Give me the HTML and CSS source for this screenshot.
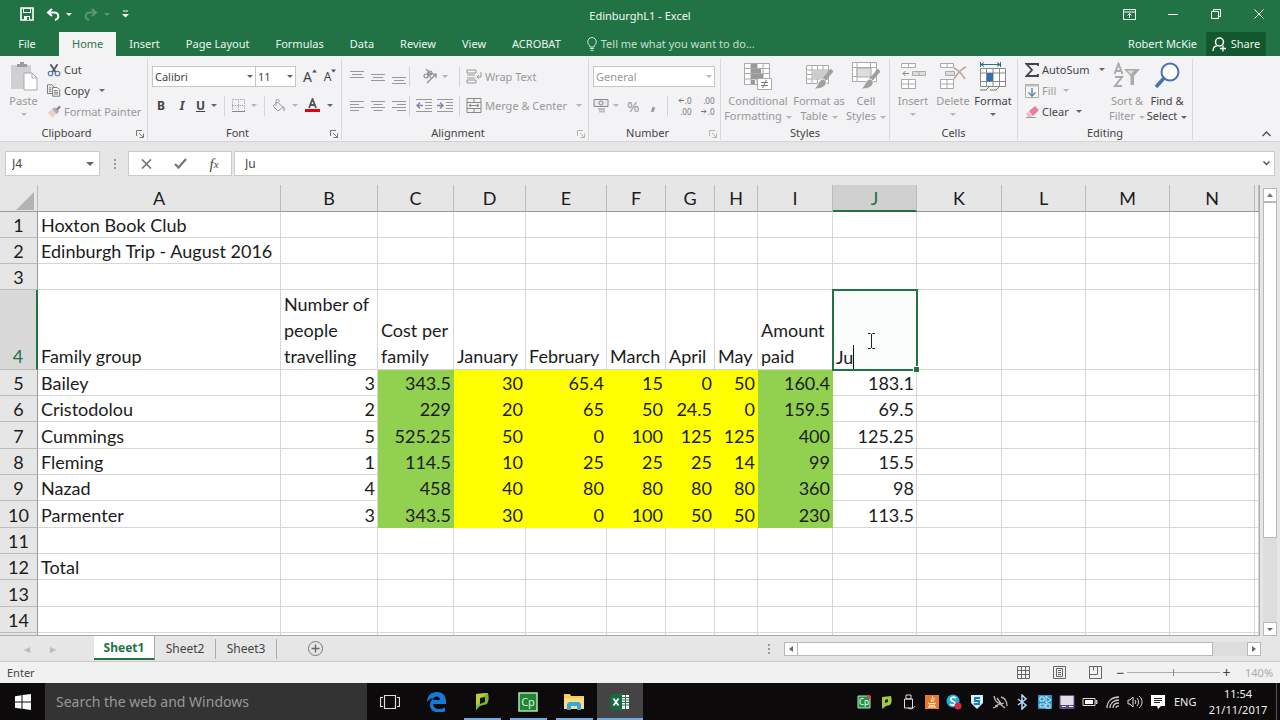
FILE: index.html
```html
<!DOCTYPE html>
<html lang="en">
<head>
<meta charset="utf-8">
<title>EdinburghL1 - Excel</title>
<link rel="stylesheet" href="styles.css">
</head>
<body>
<header class="titlebar">
  <div class="quick">
    <button aria-label="Save"><svg width="14" height="14" viewBox="0 0 14 14"><path d="M1 1h12v12H1z" fill="none" stroke="#fff" stroke-width="1.6"/><path d="M3 1h8v5H3zM4 9h6v4H4z" fill="#fff"/><path d="M4 2h6v3H4zM7 10h2v3H7z" fill="#217346"/></svg></button>
    <button aria-label="Undo"><svg width="14" height="13" viewBox="0 0 14 13"><path d="M6 1 2 4.500l4 3.500M2 4.500h6c5 0 6 6 1 7.500" fill="none" stroke="#fff" stroke-width="2"/></svg><i class="arrow light"></i></button>
    <button class="faded" aria-label="Redo"><svg width="14" height="13" viewBox="0 0 14 13"><path d="m8 1 4 3.500L8 8M12 4.500H6c-5 0-6 6-1 7.500" fill="none" stroke="#fff" stroke-width="2"/></svg><i class="arrow light"></i></button>
    <button aria-label="Customize"><svg width="7" height="8" viewBox="0 0 7 8"><path d="M1 1h5" stroke="#fff"/><path d="M0 4h7L3.500 7.500z" fill="#fff"/></svg></button>
  </div>
  <h1>EdinburghL1 - Excel</h1>
  <div class="winbtns">
    <button aria-label="Ribbon options"><svg width="13" height="11" viewBox="0 0 13 11"><path d="M.5.5h12v10H.5zM.5 3h12M6.500 9V4.500M4.500 6.500l2-2 2 2" fill="none" stroke="#fff"/></svg></button>
    <button aria-label="Minimize"><svg width="10" height="10" viewBox="0 0 10 10"><path d="M0 5.500h10" stroke="#fff"/></svg></button>
    <button aria-label="Restore"><svg width="10" height="10" viewBox="0 0 10 10"><path d="M.5 2.500h7v7h-7zM2.500 2.500v-2h7v7h-2" fill="none" stroke="#fff"/></svg></button>
    <button aria-label="Close"><svg width="10" height="10" viewBox="0 0 10 10"><path d="m.5.5 9 9m0-9-9 9" stroke="#fff"/></svg></button>
  </div>
</header>
<nav class="tabs">
  <button class="file">File</button><button class="current">Home</button><button>Insert</button><button>Page Layout</button><button>Formulas</button><button>Data</button><button>Review</button><button>View</button><button>ACROBAT</button>
  <button class="tell"><svg width="10" height="14" viewBox="0 0 10 14"><path d="M3 10C3 8 .7 7.500.7 4.800a4.300 4.300 0 0 1 8.600 0C9.300 7.500 7 8 7 10zM3 11.500h4M3.500 13.300h3" fill="none" stroke="#d9eadf"/></svg>Tell me what you want to do...</button>
  <span class="user">Robert McKie</span>
  <button class="share"><svg width="15" height="15" viewBox="0 0 15 15"><circle cx="7.500" cy="5" r="4" fill="none" stroke="#fff" stroke-width="1.500"/><path d="M1 14c0-3 2-5 4.500-5.500M8 11.500h6M11 8.500v6" fill="none" stroke="#fff" stroke-width="1.300"/></svg>Share</button>
</nav>
<section class="ribbon">
  <div class="group clipboard">
    <div class="body">
      <button class="big dim paste"><svg width="28" height="29" viewBox="0 0 28 29"><path d="M1 3h20v24H1z" fill="#d0d0d2"/><path d="M7 5V2h3V0h4v2h3v3z" fill="#9c9c9e"/><path d="M14 11h8l5 5v12H14z" fill="#fff" stroke="#a9a9ab"/><path d="M22 11v5h5" fill="none" stroke="#a9a9ab"/></svg><span>Paste</span><i class="arrow"></i></button>
      <div class="three">
        <button><svg width="14" height="14" viewBox="0 0 16 15"><path d="m4 1 6 9M12 1 6 10" stroke="#555" stroke-width="2"/><circle cx="4" cy="11.500" r="2.600" fill="none" stroke="#5572aa" stroke-width="1.300"/><circle cx="12" cy="11.500" r="2.600" fill="none" stroke="#5572aa" stroke-width="1.300"/></svg>Cut</button>
        <button><svg width="14" height="13" viewBox="0 0 16 14"><path d="M.5.5h5l3 3v7h-8z" fill="#fff" stroke="#666"/><path d="M6.500 3.500h5l3 3v7h-8zM2 4h3M2 6h3M2 8h3M8 7h4M8 9h5M8 11h5" fill="#fff" stroke="#666"/></svg>Copy<i class="arrow far"></i></button>
        <button class="dim"><svg width="14" height="13" viewBox="0 0 16 14"><path d="m1 8 5-4 5 5-5 5z" fill="#edcfc5"/><path d="m6 4 3-2 5 5-3 3z" fill="#b0acb5"/><path d="m10 4 4-4 2 2-4 4z" fill="#888995"/></svg>Format Painter</button>
      </div>
    </div>
    <footer>Clipboard<svg class="launch" viewBox="0 0 8 8"><use href="#launch"/></svg></footer>
  </div>
  <div class="group font">
    <div class="body two">
      <div class="line">
        <span class="pick w-name"><select aria-label="Font"><option>Calibri</option></select><i class="arrow"></i></span><span class="pick w-size"><select aria-label="Font size"><option>11</option></select><i class="arrow"></i></span>
        <button class="letter grow" aria-label="Increase font size">A<svg width="5" height="4" viewBox="0 0 5 4"><path d="M0 3.500 2.500.5 5 3.500z" fill="#456"/></svg></button>
        <button class="letter" aria-label="Decrease font size"><small>A</small><svg width="5" height="4" viewBox="0 0 5 4"><path d="M0 .5h5L2.500 3.500z" fill="#456"/></svg></button>
      </div>
      <div class="line styles">
        <button><b>B</b></button><button><b><em>I</em></b></button><button><b><u>U</u></b><i class="arrow"></i></button>
        <i class="rule"></i>
        <button class="dim"><svg width="13" height="13" viewBox="0 0 13 13"><path d="M.5.5h12v12H.5zM6.500 0v13M0 6.500h13" fill="none" stroke="#aaa" stroke-dasharray="1.500 1"/><path d="M0 12.500h13" stroke="#888"/></svg><i class="arrow"></i></button>
        <i class="rule"></i>
        <button class="dim"><svg width="14" height="14" viewBox="0 0 14 14"><path d="m5 3 6 5-5 4-5-5zM4 7V2c0-3 4-2 3 1" fill="#f6f6f6" stroke="#999"/><path d="M11 7c3 1 3 5 1 5s-1-3-1-5" fill="#bbc"/></svg><i class="arrow"></i></button>
        <button class="colour" aria-label="Font color"><svg width="16" height="15" viewBox="0 0 16 15"><path d="M4 10 7.500 1 11 10M5.200 7h4.600" fill="none" stroke="#555" stroke-width="1.800"/><path d="M0 11h15v3H0z" fill="#e5000b"/></svg><i class="arrow"></i></button>
      </div>
    </div>
    <footer>Font<svg class="launch" viewBox="0 0 8 8"><use href="#launch"/></svg></footer>
  </div>
  <div class="group align">
    <div class="body two dim">
      <div class="line">
        <button class="slot"><svg width="14" height="14" viewBox="0 0 14 14"><path d="M0 1.500h14M2 4.500h10M0 7.500h14" stroke="#999"/></svg></button>
        <button class="slot"><svg width="14" height="14" viewBox="0 0 14 14"><path d="M0 4.500h14M2 7.500h10M0 10.500h14" stroke="#999"/></svg></button>
        <button class="slot"><svg width="14" height="14" viewBox="0 0 14 14"><path d="M0 7.500h14M2 10.500h10M0 13.500h14" stroke="#999"/></svg></button>
        <i class="rule"></i>
        <button class="orient"><svg width="16" height="15" viewBox="0 0 16 15"><g fill="none" stroke="#888" stroke-width="1.200"><circle cx="4" cy="7" r="2"/><path d="m5 4 4 5"/><circle cx="8" cy="4" r="2"/><path d="m4 0 6 6M5 14l9-9m-4 0h4v4"/></g></svg><i class="arrow near"></i></button>
        <i class="rule"></i>
        <button class="labelled"><svg width="16" height="15" viewBox="0 0 16 15"><path d="M1 1h9v3H1zM1 6h8M1 9h8M1 11h9v3H1zM15 3v5h-4m2-2-2 2 2 2" fill="none" stroke="#999"/></svg>Wrap Text</button>
      </div>
      <div class="line">
        <button class="slot"><svg width="14" height="12" viewBox="0 0 14 12"><path d="M0 1.500h14M0 4.500h9M0 7.500h14M0 10.500h9" stroke="#999"/></svg></button>
        <button class="slot"><svg width="14" height="12" viewBox="0 0 14 12"><path d="M0 1.500h14M2.500 4.500h9M0 7.500h14M2.500 10.500h9" stroke="#999"/></svg></button>
        <button class="slot"><svg width="14" height="12" viewBox="0 0 14 12"><path d="M0 1.500h14M5 4.500h9M0 7.500h14M5 10.500h9" stroke="#999"/></svg></button>
        <i class="rule"></i>
        <div class="orient"><button class="slot"><svg width="16" height="13" viewBox="0 0 16 13"><path d="M0 .5h16M9 3.500h7M9 6.500h7M9 9.500h7M0 12.500h16" stroke="#999"/><path d="M7 6.500H1m3-3-3 3 3 3" fill="none" stroke="#7884a0" stroke-width="1.300"/></svg></button>
        <button class="slot"><svg width="16" height="13" viewBox="0 0 16 13"><path d="M0 .5h16M9 3.500h7M9 6.500h7M9 9.500h7M0 12.500h16" stroke="#999"/><path d="M0 6.500h6m-3-3 3 3-3 3" fill="none" stroke="#7884a0" stroke-width="1.300"/></svg></button></div>
        <i class="rule"></i>
        <button class="labelled"><svg width="16" height="15" viewBox="0 0 16 15"><path d="M1 .5h14v14H1zM1 4.500h14M1 10.500h14M8 .5v4M8 10.500v4M3 7.500h10M5 6 3 7.500 5 9M11 6l2 1.500L11 9" fill="none" stroke="#888"/></svg>Merge &amp; Center<i class="arrow far"></i></button>
      </div>
    </div>
    <footer>Alignment<svg class="launch pale" viewBox="0 0 8 8"><use href="#launch"/></svg></footer>
  </div>
  <div class="group number">
    <div class="body two dim">
      <div class="line"><span class="pick w-format"><select aria-label="Number format"><option>General</option></select><i class="arrow"></i></span></div>
      <div class="line nums">
        <button><svg width="16" height="15" viewBox="0 0 16 15"><path d="M1 1.500h14v7H1z" fill="#e7e9ee" stroke="#888"/><circle cx="8" cy="5" r="2" fill="none" stroke="#888"/><path d="M5 11h7M6 13.500h6" stroke="#bbb" stroke-width="2"/></svg><i class="arrow near"></i></button>
        <button class="percent">%</button><button class="comma">,</button>
        <i class="rule"></i>
        <button class="decimal" aria-label="Increase decimal"><span><svg width="6" height="5" viewBox="0 0 6 5"><path d="M6 2.500H1m2-2-2 2 2 2" fill="none" stroke="#777"/></svg>.0</span><span>.00</span></button><button class="decimal" aria-label="Decrease decimal"><span>.00</span><span><svg width="6" height="5" viewBox="0 0 6 5"><path d="M0 2.500h5m-2-2 2 2-2 2" fill="none" stroke="#777"/></svg>.0</span></button>
      </div>
    </div>
    <footer>Number<svg class="launch pale" viewBox="0 0 8 8"><use href="#launch"/></svg></footer>
  </div>
  <div class="group looks">
    <div class="body dim">
      <button class="big w-cond"><svg width="28" height="29" viewBox="0 0 28 29"><path d="M.5 1.500h25v21H.5zM.5 6.500h25M.5 11.500h25M.5 17h25M7 1.500v21M13 1.500v21M19 1.500v21" fill="#fff" stroke="#aaa"/><path d="M7 2h6v4H7zM7 7h10v4H7zM7 12h12v5H7zM7 18h4v4H7z" fill="#999"/><path d="M13.500 16.500h14v11h-14z" fill="#fff" stroke="#aaa"/><path d="M17 20.500h7M17 23.500h7M22.500 18l-4 8" stroke="#777"/></svg><span>Conditional<br>Formatting<i class="arrow near"></i></span></button>
      <button class="big w-table"><svg width="28" height="29" viewBox="0 0 28 29"><use href="#gridbrush"/></svg><span>Format as<br>Table<i class="arrow near"></i></span></button>
      <button class="big w-cell"><svg width="28" height="29" viewBox="0 0 28 29"><path d="M.5.5h24v19H.5zM.5 5.500h24M.5 14.500h24M5 .5v19M18.500.5v19" fill="#fff" stroke="#aaa"/><path d="M5 6h14v9H5z" fill="#ddd" stroke="#aaa"/><use href="#brush"/></svg><span>Cell<br>Styles<i class="arrow near"></i></span></button>
    </div>
    <footer>Styles</footer>
  </div>
  <div class="group cells">
    <div class="body">
      <button class="big dim"><svg width="26" height="29" viewBox="0 0 26 29"><path d="M1.500 1.500h14v4h-14zM8.500 1.500v4M1.500 17.500h14v9h-14zM8.500 17.500v9M1.500 22h14" fill="#fff" stroke="#aaa"/><path d="M12.500 9.500h13v4h-13zM19 9.500v4" fill="#ddd" stroke="#aaa"/><path d="M9 11.500H3m2.500-2.500L3 11.500 5.500 14" fill="none" stroke="#888"/></svg><span>Insert</span><i class="arrow"></i></button>
      <button class="big dim"><svg width="28" height="29" viewBox="0 0 28 29"><path d="M1.500 1.500h13v4h-13zM8 1.500v4M1.500 17.500h13v9h-13zM8 17.500v9M1.500 22h13" fill="#fff" stroke="#aaa"/><path d="M6.500 9.500h9v4h-9z" fill="#ddd" stroke="#aaa"/><path d="M15 6c4 2 8 6 11 11M27 5c-5 2-9 7-12 12" fill="none" stroke="#b9a796" stroke-width="1.500"/></svg><span>Delete</span><i class="arrow"></i></button>
      <button class="big"><svg width="28" height="29" viewBox="0 0 28 29"><path d="M1.500 6.500h25v18h-25zM1.500 11h25M1.500 19.500h25M7.500 6.500v18M14 6.500v18M20.500 6.500v18" fill="#fff" stroke="#888"/><path d="M8 11h6v8H8z" fill="#2c71b8"/><path d="M1.500 0v5M21.500 0v5M2 2.500h19M5 .5l-3 2 3 2M18 .5l3 2-3 2" fill="none" stroke="#2d7180"/><path d="M1 28h6l3-3M11 28h6l3-3" fill="none" stroke="#777"/></svg><span>Format</span><i class="arrow"></i></button>
    </div>
    <footer>Cells</footer>
  </div>
  <div class="group editing">
    <div class="body">
      <div class="three">
        <button><svg width="14" height="14" viewBox="0 0 14 14"><path d="M13 3V1H1.500l5.500 6-5.500 6H13v-2" fill="none" stroke="#444" stroke-width="1.800"/></svg>AutoSum<i class="arrow far"></i></button>
        <button class="dim"><svg width="14" height="14" viewBox="0 0 14 14"><path d="M.5.5h13v13H.5z" fill="#f8f8f8" stroke="#aaa"/><path d="M.5.5h13v2H.5z" fill="#bbb"/><path d="M7 4v8M3.500 8.500 7 12l3.500-3.500" fill="none" stroke="#6e8ba5" stroke-width="1.600"/></svg>Fill<i class="arrow near"></i></button>
        <button><svg width="14" height="14" viewBox="0 0 14 14"><path d="m4 6 6-5 4 4-6 6z" fill="#e87f9d"/><path d="m3.500 6.500 4 4L6 12H3L1 9z" fill="#f7b9ca"/><path d="M1 12.500h10" stroke="#999"/></svg>Clear<i class="arrow near"></i></button>
      </div>
      <button class="big dim"><svg width="28" height="29" viewBox="0 0 28 29"><path d="M1.500 12 5.500 2l4 10M3 9h5M2 15h7l-7 9h7" fill="none" stroke="#aaa" stroke-width="2"/><path d="M11 7h16l-6 7v9h-3.500v-9z" fill="#aaa"/><path d="M14 8.500h7l-3 4z" fill="#ddd"/></svg><span>Sort &amp;<br>Filter<i class="arrow near"></i></span></button>
      <button class="big"><svg width="28" height="29" viewBox="0 0 28 29"><circle cx="17" cy="10" r="8.500" fill="#fff" stroke="#4773ae" stroke-width="2"/><path d="m11 16-8 9" stroke="#4773ae" stroke-width="3.500"/></svg><span>Find &amp;<br>Select<i class="arrow near"></i></span></button>
    </div>
    <footer>Editing</footer>
  </div>
  <button class="collapse" aria-label="Collapse ribbon"><svg width="9" height="6" viewBox="0 0 9 6"><path d="m.5 5 4-4 4 4" fill="none" stroke="#555" stroke-width="1.500"/></svg></button>
</section>
<section class="formula">
  <div class="namebox"><input value="J4" aria-label="Name box"><i class="arrow wide"></i></div>
  <i class="dots"></i>
  <div class="fx">
    <button aria-label="Cancel"><svg width="11" height="10" viewBox="0 0 11 10"><path d="m1 .5 9 9m0-9-9 9" stroke="#777" stroke-width="1.700"/></svg></button>
    <button aria-label="Enter"><svg width="13" height="11" viewBox="0 0 13 11"><path d="m1 6 3.500 3.500L12 1" fill="none" stroke="#777" stroke-width="2.300"/></svg></button>
    <button class="fn" aria-label="Insert function"><em>f</em><sub><em>x</em></sub></button>
  </div>
  <div class="entry"><input value="Ju" aria-label="Formula"><svg width="7" height="5" viewBox="0 0 7 5"><path d="m.5.5 3 3 3-3" fill="none" stroke="#555" stroke-width="1.500"/></svg></div>
</section>
<main class="sheet">
  <div class="gridwrap">
  <table>
    <colgroup><col class="c0"><col class="ca"><col class="cb"><col class="cc"><col class="cd"><col class="ce"><col class="cf"><col class="cg"><col class="ch"><col class="ci"><col class="cj"><col class="ck"><col class="cj"><col class="cj"><col class="ck"><col></colgroup>
    <thead><tr><th><svg width="18" height="18" viewBox="0 0 18 18"><path d="M18 0v18H0z" fill="#b3b3b3"/></svg></th><th>A</th><th>B</th><th>C</th><th>D</th><th>E</th><th>F</th><th>G</th><th>H</th><th>I</th><th class="on">J</th><th>K</th><th>L</th><th>M</th><th>N</th><th></th></tr></thead>
    <tbody>
    <tr><th>1</th><td>Hoxton Book Club</td><td></td><td></td><td></td><td></td><td></td><td></td><td></td><td></td><td></td><td></td><td></td><td></td><td></td><td></td></tr>
    <tr><th>2</th><td>Edinburgh Trip - August 2016</td><td></td><td></td><td></td><td></td><td></td><td></td><td></td><td></td><td></td><td></td><td></td><td></td><td></td><td></td></tr>
    <tr><th>3</th><td></td><td></td><td></td><td></td><td></td><td></td><td></td><td></td><td></td><td></td><td></td><td></td><td></td><td></td><td></td></tr>
    <tr class="head"><th class="on">4</th><td>Family group</td><td>Number of<br>people<br>travelling</td><td>Cost per<br>family</td><td>January</td><td>February</td><td>March</td><td>April</td><td>May</td><td>Amount<br>paid</td><td class="active"><div class="edit"><input value="Ju" aria-label="J4"><i class="caret"></i></div><svg class="ibeam" width="7" height="16" viewBox="0 0 7 16"><path d="M0 .5h2.500l1 1 1-1H7M3.500 1v14M0 15.500h2.500l1-1 1 1H7" fill="none" stroke="#222"/></svg></td><td></td><td></td><td></td><td></td><td></td></tr>
    <tr class="data"><th>5</th><td>Bailey</td><td>3</td><td>343.5</td><td>30</td><td>65.4</td><td>15</td><td>0</td><td>50</td><td>160.4</td><td>183.1</td><td></td><td></td><td></td><td></td><td></td></tr>
    <tr class="data"><th>6</th><td>Cristodolou</td><td>2</td><td>229</td><td>20</td><td>65</td><td>50</td><td>24.5</td><td>0</td><td>159.5</td><td>69.5</td><td></td><td></td><td></td><td></td><td></td></tr>
    <tr class="data"><th>7</th><td>Cummings</td><td>5</td><td>525.25</td><td>50</td><td>0</td><td>100</td><td>125</td><td>125</td><td>400</td><td>125.25</td><td></td><td></td><td></td><td></td><td></td></tr>
    <tr class="data"><th>8</th><td>Fleming</td><td>1</td><td>114.5</td><td>10</td><td>25</td><td>25</td><td>25</td><td>14</td><td>99</td><td>15.5</td><td></td><td></td><td></td><td></td><td></td></tr>
    <tr class="data"><th>9</th><td>Nazad</td><td>4</td><td>458</td><td>40</td><td>80</td><td>80</td><td>80</td><td>80</td><td>360</td><td>98</td><td></td><td></td><td></td><td></td><td></td></tr>
    <tr class="data"><th>10</th><td>Parmenter</td><td>3</td><td>343.5</td><td>30</td><td>0</td><td>100</td><td>50</td><td>50</td><td>230</td><td>113.5</td><td></td><td></td><td></td><td></td><td></td></tr>
    <tr><th>11</th><td></td><td></td><td></td><td></td><td></td><td></td><td></td><td></td><td></td><td></td><td></td><td></td><td></td><td></td><td></td></tr>
    <tr><th>12</th><td>Total</td><td></td><td></td><td></td><td></td><td></td><td></td><td></td><td></td><td></td><td></td><td></td><td></td><td></td><td></td></tr>
    <tr><th>13</th><td></td><td></td><td></td><td></td><td></td><td></td><td></td><td></td><td></td><td></td><td></td><td></td><td></td><td></td><td></td></tr>
    <tr><th>14</th><td></td><td></td><td></td><td></td><td></td><td></td><td></td><td></td><td></td><td></td><td></td><td></td><td></td><td></td><td></td></tr>
    <tr><th></th><td></td><td></td><td></td><td></td><td></td><td></td><td></td><td></td><td></td><td></td><td></td><td></td><td></td><td></td><td></td></tr>
    </tbody>
  </table>
  </div>
  <div class="vscroll"><button aria-label="Scroll up"><i class="arrow up"></i></button><div class="thumb"></div><div class="space"></div><button aria-label="Scroll down"><i class="arrow"></i></button></div>
</main>
<section class="sheets">
  <div class="pager"><i>◂</i><i>▸</i></div>
  <button class="sel">Sheet1</button><button>Sheet2</button><button>Sheet3</button>
  <button class="add" aria-label="New sheet"><svg width="15" height="15" viewBox="0 0 15 15"><circle cx="7.500" cy="7.500" r="7" fill="none" stroke="#777"/><path d="M3.500 7.500h8M7.500 3.500v8" stroke="#666" stroke-width="1.400"/></svg></button>
  <i class="dots"></i>
  <div class="hscroll"><button aria-label="Scroll left"><i class="arrow left"></i></button><div class="thumb"></div><div class="space"></div><button aria-label="Scroll right"><i class="arrow right"></i></button></div>
</section>
<section class="status">
  <span class="mode">Enter</span>
  <div class="views">
    <button aria-label="Normal"><svg width="13" height="13" viewBox="0 0 13 13"><path d="M.5.5h12v12H.5zM4.500.5v12M8.500.5v12M.5 4.500h12M.5 8.500h12" fill="none" stroke="#666"/></svg></button>
    <button aria-label="Page layout"><svg width="13" height="13" viewBox="0 0 13 13"><path d="M.5.5h12v12H.5zM3.500 2.500h6v8h-6zM5 4.500h3M5 6.500h3M5 8.500h3" fill="none" stroke="#666"/></svg></button>
    <button aria-label="Page break preview"><svg width="13" height="13" viewBox="0 0 13 13"><path d="M.5.5h12v12H.5zM.5 8.500h8v-8M4.500.5v4" fill="none" stroke="#666"/></svg></button>
  </div>
  <div class="zoom"><button aria-label="Zoom out">−</button><input type="range" min="0" max="100" value="50" aria-label="Zoom"><button aria-label="Zoom in">+</button></div>
  <output>140%</output>
</section>
<footer class="taskbar">
  <button class="start" aria-label="Start"><svg width="16" height="16" viewBox="0 0 16 16"><path d="m0 2.200 6.500-.9v6.200H0zM7.500 1.100 16 0v7.500H7.500zM0 8.500h6.500v6.200L0 13.800zM7.500 8.500H16V16l-8.500-1.200z" fill="#fff"/></svg></button>
  <input class="search" placeholder="Search the web and Windows" aria-label="Search the web and Windows">
  <button class="app" aria-label="Task view"><svg width="20" height="14" viewBox="0 0 20 14"><path d="M4.500.5h11v13h-11zM3 2.500H.5v9H3M17 2.500h2.500v9H17" fill="none" stroke="#ddd" stroke-width="1.200"/></svg></button>
  <button class="app" aria-label="Edge"><svg width="19" height="20" viewBox="0 0 19 20"><path d="M0 10C0 4 4 0 10 0c6 0 9 4 9 9v3H6c0 3 3 5 6 5 2 0 4-.5 6-1.500v4C11 22 3 20 3 13c0-3 1-5 4-7C4 6 1.500 8 0 10zM6 8h7c0-4-6-5-7 0z" fill="#1479d8"/></svg></button>
  <button class="app open" aria-label="Designer"><svg width="15" height="19" viewBox="0 0 15 19"><path d="M1 2 13 1c1 4 1 8-1 11l-7 2-4 4z" fill="#7fb535"/><path d="M1 2 13 1 6 6l-2 7-3 5z" fill="#b9cc3c"/><path d="m5 6 5-1v5l-5 2z" fill="#11170b"/><path d="m1 13 4-1-4 6z" fill="#62c05a"/></svg></button>
  <button class="app open" aria-label="Captivate"><svg width="20" height="20" viewBox="0 0 20 20"><path d="M1 1h18v18H1z" fill="#218539" stroke="#b8e0ae" stroke-width="1.500"/><text x="10" y="14" text-anchor="middle" class="logo">Cp</text></svg></button>
  <button class="app open" aria-label="File Explorer"><svg width="20" height="18" viewBox="0 0 20 18"><path d="M0 1h6l1 2h13v13H0z" fill="#f5cb5c"/><path d="M0 5h20v11H0z" fill="#fbdc80"/><path d="M3 17v-6l2-2h10l2 2v6h-4v-4H7v4z" fill="#38a8dc"/></svg></button>
  <button class="app open front" aria-label="Excel"><svg width="20" height="18" viewBox="0 0 20 18"><path d="M11 2h8v14h-8z" fill="#fff"/><path d="M12 4.500h7M12 7h7M12 9.500h7M12 12h7M15.500 2v14" stroke="#217346"/><path d="m0 2 12-2v18L0 16z" fill="#176b3e"/><path d="m3.500 5.500 5 7m0-7-5 7" stroke="#fff" stroke-width="1.800"/></svg></button>
  <div class="tray">
    <svg viewBox="0 0 16 16"><path d="M2 2h12v12H2z" fill="#1d9447" stroke="#bde3bd"/><text x="8" y="11" text-anchor="middle" class="mini">Cp</text><circle cx="13" cy="3" r="2" fill="#df3d43"/></svg>
    <svg viewBox="0 0 16 16"><path d="m3 3 9-1c1 4 1 7-1 9l-4 1-4 3z" fill="#a5c843"/><path d="m6 6 3-1v3L6 9z" fill="#182611"/></svg>
    <svg viewBox="0 0 16 16"><path d="M5 1h5v4H5zM3.500 5h8v9h-8zM7 14c3 2 6 0 7-2" fill="none" stroke="#ddd"/></svg>
    <svg viewBox="0 0 16 16"><path d="M1 1h14v14H1z" fill="#e67a24"/><path d="M8 2c3 2-3 3 0 6M10 4c1 2-2 2-1 4M4 9c1 1 7 1 8 0M5 11c2 1 4 1 6 0M4 13h8" fill="none" stroke="#fff"/></svg>
    <svg viewBox="0 0 16 16"><circle cx="7" cy="7" r="6.500" fill="#28a8df"/><path d="M10 4C7 2 4 4 5 6s5 1 4 4c-1 2-4 1-5 0" fill="none" stroke="#fff" stroke-width="1.700"/><circle cx="12" cy="12" r="3.500" fill="#d62946"/></svg>
    <svg viewBox="0 0 16 16"><path d="M2 1h12v8l-6 6-6-6z" fill="#d8edfa"/><path d="M11 4H6v3h4v3H5" fill="none" stroke="#157bb6" stroke-width="1.800"/></svg>
    <svg viewBox="0 0 16 16"><path d="M2 2c1 6 5 9 10 7M5 4l5 7M3 12l5-2 5 4M9 3c4 1 6 5 6 9M1 14l5-2" fill="none" stroke="#bbb" stroke-width="1.300"/></svg>
    <svg viewBox="0 0 16 16"><path d="m4 5 8 6-4 4V1l4 4-8 6" fill="none" stroke="#b7dcff" stroke-width="1.500"/></svg>
    <svg viewBox="0 0 16 16"><path d="M1 1h14v14H1z" fill="#2b94cb"/><path d="M3 3h4v4H3zM3 10h5v3H3zM9 2l5 4-5 3zM9 10h4v4H9z" fill="none" stroke="#d4effa"/></svg>
    <svg viewBox="0 0 16 16"><path d="M1 1.500h14v13H1z" fill="#e1dfe8" stroke="#62548a"/><path d="M1 11h14v3H1z" fill="#55467c"/><path d="M3 12.500h4M10 12.500h4" stroke="#fff"/></svg>
    <svg viewBox="0 0 16 16"><path d="M1 4.500h12v7H1zM14 6.500h1v3h-1z" fill="none" stroke="#ddd"/><path d="M3 6h8v4H3z" fill="#fff"/></svg>
    <svg viewBox="0 0 16 16"><path d="M2 14C2 7 7 3 14 3M5 14c0-5 4-8 9-8M8 14c0-3 2-5 6-5M11 14c0-2 1-2 3-2" fill="none" stroke="#ccc" stroke-width="1.300"/></svg>
    <svg viewBox="0 0 16 16"><path d="M1 6h2l3-3v10l-3-3H1zM8 6c1 1 1 3 0 4M10 4c2 2 2 6 0 8M12 2c4 3 4 9 0 12" fill="none" stroke="#ddd"/></svg>
    <svg viewBox="0 0 16 16"><path d="M1 1h14v11h-4l-3 3-1-3H1z" fill="#fff"/><path d="M4 4.500h8M4 6.500h8M4 8.500h6" stroke="#222"/></svg>
  </div>
  <span class="lang">ENG</span>
  <time>11:54<br>21/11/2017</time>
  <i class="peek"></i>
</footer>
<svg class="defs" width="0" height="0">
  <symbol id="launch" viewBox="0 0 8 8"><path d="M.5 6V.5H6M3 3l4 4M7.500 3.500v4h-4" fill="none" stroke="#777"/></symbol>
  <symbol id="brush" viewBox="0 0 28 29"><path d="m27 8-9 11" stroke="#a0a0a0" stroke-width="4"/><path d="M17 17c3 0 5 2 4 5-2 4-6 5-12 5 4-3 4-8 8-10z" fill="#a0a0a0" stroke="#f4f4f4"/></symbol>
  <symbol id="gridbrush" viewBox="0 0 28 29"><path d="M1.500 3.500h22v18h-22zM1.500 8h22M1.500 12.500h22M1.500 17h22M7 3.500v18M12.500 3.500v18M18 3.500v18" fill="#fff" stroke="#aaa"/><path d="M7 8h16v9H7z" fill="#ccc"/><use href="#brush"/></symbol>
</svg>
</body>
</html>
```

FILE: styles.css
```css
* { box-sizing: border-box; }
html, body { height: 100%; }
body { margin: 0; display: flex; flex-direction: column; overflow: hidden; font: 12px/16px "Noto Sans", "Open Sans", sans-serif; color: #444; background: #e6e6e6; }
button, input, select { font: inherit; color: inherit; border: 0; margin: 0; padding: 0; background: none; }
button { display: flex; align-items: center; justify-content: center; white-space: nowrap; }
svg { flex: none; }
.defs { display: none; }
.arrow { flex: none; width: 0; height: 0; border: 3px solid transparent; border-top-color: #666; border-bottom: 0; }
.arrow.light { border-top-color: #fff; }
.arrow.near { margin-left: 4px; }
.arrow.far { margin-left: 6px; }
.arrow.wide { border-width: 4px 4px 0; }
.arrow.up { border-top: 0; border-bottom: 4px solid #777; }
.arrow.left { border: 3px solid transparent; border-left: 0; border-right: 4px solid #666; }
.arrow.right { border: 3px solid transparent; border-right: 0; border-left: 4px solid #666; }
.dim { color: #989898; }
.dim .arrow { border-top-color: #b5b5b5; }

.titlebar { display: grid; grid-template-columns: 1fr auto 1fr; align-items: center; height: 32px; flex: none; background: #217346; color: #f2f8f4; }
.titlebar h1 { margin: 0; font-size: 11px; font-weight: 400; }
.quick { display: flex; align-items: center; gap: 12px; padding: 0 0 4px 20px; }
.quick button { gap: 6px; }
.quick .faded { opacity: .25; }
.winbtns { display: flex; justify-content: flex-end; padding-bottom: 4px; }
.winbtns button { width: 43px; }

.tabs { display: flex; height: 24px; flex: none; background: #217346; color: #edf6f0; font-size: 11px; }
.tabs button { padding: 0 13px; }
.tabs .file { width: 59px; padding: 0 5px 0 0; }
.tabs .current { background: #f3f3f3; color: #31724d; padding: 0 13px; }
.tabs .tell { gap: 4px; color: #c5dfd0; }
.user { margin-left: auto; padding: 4px 9px; }
.tabs .share { width: 60px; padding: 0; margin-right: 14px; gap: 4px; background: #13572f; }

.ribbon { display: flex; flex: none; height: 86px; background: #f3f2f4; border-bottom: 1px solid #d4d4d4; font-size: 11px; }
.group { position: relative; display: flex; flex-direction: column; flex: none; border-right: 1px solid #d8d8da; margin: 3px 0 1px; }
.group .body { display: flex; flex: 1; min-height: 0; }
.group footer { text-align: center; line-height: 14px; height: 14px; }
.group footer:has(.launch) { padding-right: 14px; }
.launch { position: absolute; right: 3px; bottom: 2px; width: 8px; height: 8px; }
.launch.pale { opacity: .5; }
.clipboard { width: 148px; }
.font { width: 194px; }
.align { width: 247px; }
.number { width: 132px; }
.looks { width: 169px; }
.cells { width: 128px; }
.editing { width: 175px; }
.three { display: flex; flex-direction: column; }
.three button { height: 21px; justify-content: flex-start; gap: 3px; }
.big { flex-direction: column; justify-content: flex-start; padding-top: 3px; line-height: 15px; width: 40px; }
.big svg { margin-bottom: 2px; }
.big > .arrow { margin-top: 5px; }
.big span { text-align: center; }
.big span .arrow { display: inline-block; vertical-align: middle; }
.paste { width: 47px; }
.body.two { flex-direction: column; padding-top: 3px; }
.line { display: flex; align-items: center; height: 29px; }
.rule { width: 1px; height: 20px; background: #d4d4d6; }
.font .line { padding-left: 4px; }
.pick { display: flex; align-items: center; height: 21px; border: 1px solid #c6c6c6; background: #fff; padding-right: 2px; }
.pick select { appearance: none; flex: 1; min-width: 0; padding-left: 2px; }
.w-name { width: 104px; }
.w-size { width: 40px; border-left: 0; }
.letter { align-items: flex-start; font-size: 14px; width: 20px; }
.letter.grow { margin-left: 4px; }
.letter small { font-size: 12px; }
.styles { gap: 7px; }
.font .styles { padding-left: 6px; }
.styles button { font-size: 12px; min-width: 14px; }
.styles .arrow { margin-left: 6px; }
.slot { width: 21px; }
.align .line { padding-left: 4px; }
.orient { display: flex; width: 49px; justify-content: center; }
.labelled { gap: 3px; padding-left: 6px; }
.number .line { padding-left: 4px; }
.w-format { width: 122px; }
.nums { gap: 8px; }
.nums .decimal { flex-direction: column; align-items: flex-end; font-size: 8px; line-height: 11px; width: 15px; color: #777; }
.decimal span { display: flex; align-items: center; gap: 1px; }
.percent { font-size: 15px; }
.comma { font-size: 20px; font-weight: 700; line-height: 20px; padding-bottom: 8px; width: 12px; }
.w-cond { width: 74px; }
.w-table { width: 48px; }
.w-cell { width: 46px; }
.cells .body { padding-left: 3px; }
.editing .body { padding-left: 7px; }
.editing .three { width: 82px; }
.collapse { margin: auto 9px 4px auto; }

.formula { display: flex; align-items: center; flex: none; height: 43px; padding: 0 5px; }
.formula > div { display: flex; align-items: center; height: 25px; border: 1px solid #cbcbcb; background: #fff; }
.formula .namebox { width: 95px; padding: 0 5px 0 6px; }
.namebox input { flex: 1; min-width: 0; }
.dots { width: 2px; height: 10px; margin: 0 12px 0 14px; background: repeating-linear-gradient(#999 0 2px, transparent 2px 4px); }
.formula .fx { width: 104px; }
.fx button { flex: 1; }
.fx .fn { font: 15px/18px "Liberation Serif", serif; }
.fn sub { font-size: 11px; line-height: 8px; }
.formula .entry { flex: 1; margin-left: 2px; padding: 0 4px 0 10px; }
.entry input { flex: 1; min-width: 0; }

.sheet { display: flex; flex: 1; min-height: 0; }
.gridwrap { flex: 1; min-width: 0; overflow: hidden; border-right: 1px solid #aaa; border-bottom: 1px solid #aaa; background: #fff; }
table { width: 100%; table-layout: fixed; border-collapse: separate; border-spacing: 0; font: 18px/26px Lato, "Open Sans", sans-serif; color: #1c1c1c; }
.c0 { width: 38px; } .ca { width: 243px; } .cb { width: 97px; } .cc { width: 76px; } .cd { width: 72px; } .ce { width: 81px; } .cf { width: 59px; } .cg { width: 49px; } .ch { width: 43px; } .ci { width: 75px; } .cj { width: 84px; } .ck { width: 85px; }
th, td { padding: 0; height: 26px; overflow: hidden; white-space: nowrap; border: 0 solid #d6d6d6; border-width: 0 1px 1px 0; }
th { font-weight: 400; background: #e6e6e6; border-color: #bbb; line-height: 24px; }
thead th { height: 27px; border-bottom-color: #999; }
thead th:first-child { text-align: right; padding: 5px 3px 0 0; line-height: 0; }
tbody th { border-right-color: #999; padding-top: 1px; }
tbody tr:nth-child(3n+7) > * { height: 27px; }
thead .on { background: #d0d0d0; color: #217346; border-bottom: 2px solid #217346; }
tbody .on { background: #d8d8d8; color: #217346; border-right: 2px solid #217346; }
td { padding: 1px 2px 0 3px; line-height: 24px; }
.head > * { height: 79px; line-height: 26px; vertical-align: bottom; }
.data td:nth-child(n+3) { text-align: right; }
.data td:nth-child(4), .data td:nth-child(10) { background: #92d050; border-color: #92d050; }
.data td:nth-child(n+5):nth-child(-n+9) { background: #ff0; border-color: #ff0; }
.head .active { position: relative; background: #fafdfc; outline: 2px solid #217346; outline-offset: -1px; overflow: visible; }
.active::after { content: ""; position: absolute; right: -3px; bottom: -3px; width: 5px; height: 5px; background: #217346; border: 1px solid #fff; border-width: 1px 0 0 1px; }
.edit { display: flex; align-items: center; height: 25px; }
.edit input { width: 17px; }
.caret { width: 1px; height: 24px; background: #111; }
.ibeam { position: absolute; left: 35px; top: 43px; }

.vscroll { display: flex; flex-direction: column; width: 20px; padding: 3px 3px 0; flex: none; }
.vscroll button, .vscroll .thumb, .hscroll button, .hscroll .thumb { border: 1px solid #b8b8b8; background: #fff; flex: none; }
.vscroll button { height: 14px; }
.vscroll .thumb { flex: 4 0 0; }
.vscroll .space { flex: 1 0 0; background: #ddd; }

.sheets { display: flex; align-items: center; flex: none; height: 26px; border-bottom: 1px solid #c9c9c9; }
.pager { display: flex; width: 94px; padding-left: 24px; gap: 18px; color: #bbb; }
.pager i { font-style: normal; width: 8px; }
.sheets > button { width: 61px; height: 20px; border-right: 1px solid #aaa; }
.sheets > .sel { align-self: flex-start; height: 24px; padding-top: 2px; background: #fff; color: #217346; font-weight: 700; border-bottom: 2px solid #217346; }
.sheets > .add { width: 76px; border: 0; }
.sheets .dots { margin-left: auto; margin-right: 14px; }
.hscroll { display: flex; width: 37.3%; height: 14px; margin-right: 19px; }
.hscroll button { width: 14px; }
.hscroll .thumb { flex: 12 0 0; border-left: 0; }
.hscroll .space { flex: 1 0 0; background: #ddd; }

.status { display: flex; align-items: center; flex: none; height: 21px; padding: 0 10px 0 7px; background: #f1f1f1; font-size: 11px; }
.views { display: flex; gap: 23px; margin-left: auto; }
.zoom { display: flex; align-items: center; gap: 2px; margin-left: 14px; font-size: 14px; }
.zoom input { appearance: none; width: 93px; height: 13px; background: linear-gradient(#aaa, #aaa) center/100% 1px no-repeat; }
.zoom input::-webkit-slider-thumb { appearance: none; width: 1px; height: 7px; background: #888; }
.zoom button { width: 9px; }
.status output { width: 25px; margin-left: 14px; color: #aaa; }

.taskbar { display: flex; flex: none; height: 37px; background: #0c0a0b; color: #eee; }
.start { width: 45px; }
.search { width: 322px; padding-left: 11px; background: #333; font-size: 14px; }
.search::placeholder { color: #999; opacity: 1; }
.app { width: 46px; }
.open { background: linear-gradient(#76a9de, #76a9de) center bottom/37px 2px no-repeat; }
.open.front { background-color: #444; background-size: 100% 2px; }
.logo { font-size: 11px; fill: #d9f4d2; }
.mini { font-size: 8px; fill: #fff; }
.tray { display: flex; align-items: center; justify-content: space-between; width: 310px; margin-left: auto; }
.tray svg { width: 16px; height: 16px; }
.lang { align-self: center; margin-left: 8px; width: 26px; font-size: 11px; }
.taskbar time { align-self: center; width: 76px; text-align: center; font-size: 11px; }
.peek { width: 4px; border-left: 1px solid #555; }
```
